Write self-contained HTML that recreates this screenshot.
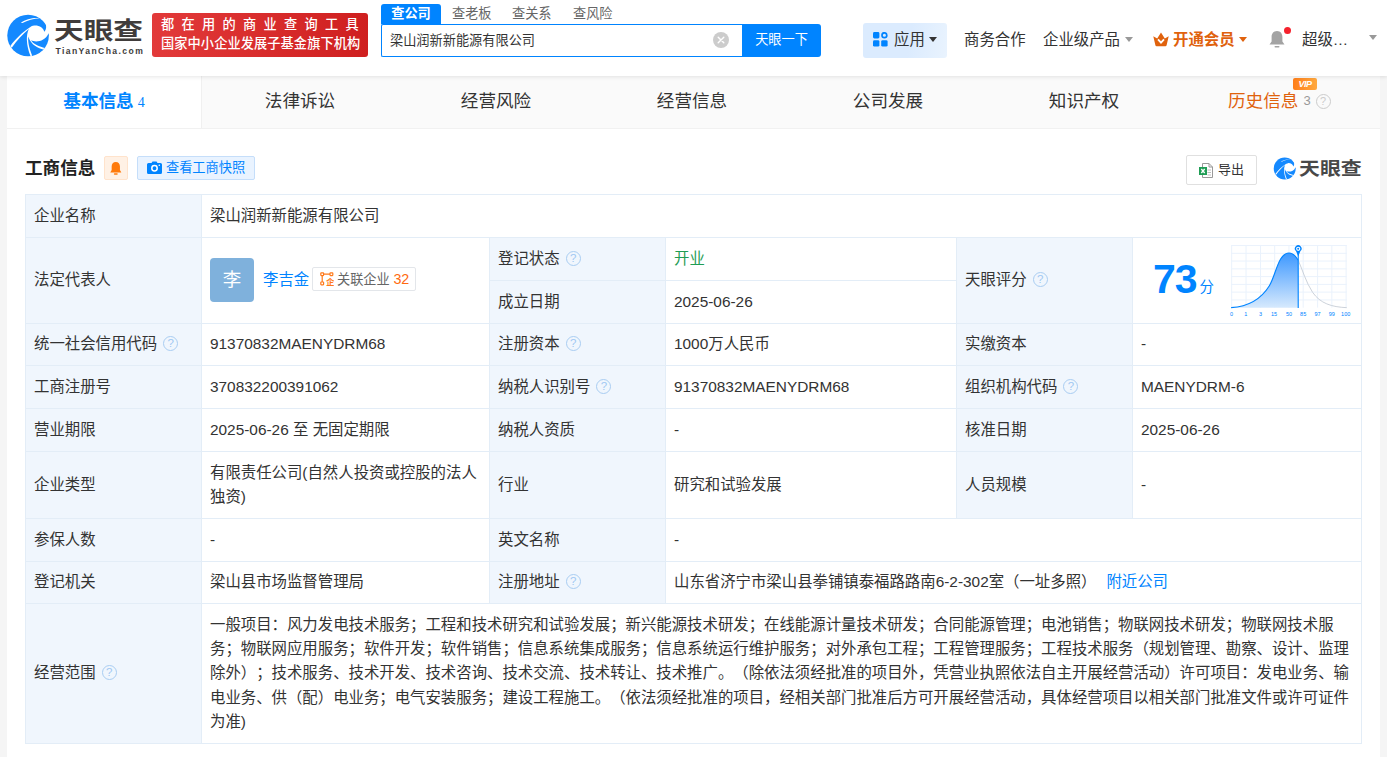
<!DOCTYPE html>
<html lang="zh-CN">
<head>
<meta charset="utf-8">
<title>梁山润新新能源有限公司 - 天眼查</title>
<style>
*{box-sizing:border-box;margin:0;padding:0}
html,body{width:1387px;height:757px;overflow:hidden;background:#f5f5f5}
body{font-family:"Liberation Sans","Noto Sans CJK SC",sans-serif;color:#333;font-size:15px;position:relative;text-spacing-trim:space-all}
a{text-decoration:none;color:inherit}
.abs{position:absolute}
/* header */
#hd{position:absolute;left:0;top:0;width:1387px;height:76px;background:#fff;box-shadow:0 1px 4px rgba(0,0,0,.10);z-index:5}
#logoTxt{left:54px;top:12.5px;font-size:24px;font-weight:700;color:#403c3b;letter-spacing:0;line-height:36px;transform-origin:left top;transform:scaleX(1.235);white-space:nowrap}
#logoSub{left:55.5px;top:44.8px;font-size:8.6px;font-weight:700;color:#403c3b;letter-spacing:1.4px;line-height:12px;white-space:nowrap}
#banner{left:152px;top:13px;width:216px;height:44px;border-radius:3px;background:linear-gradient(90deg,#e23a3a,#cf1f1f);color:#fff;font-size:13.2px;font-weight:500;line-height:19px;padding:2px 0 0 9px;white-space:nowrap}
#banner .l1{letter-spacing:7.3px;display:block;height:19px}
#banner .l2{display:block;letter-spacing:.1px}
.stab{top:4px;height:20px;font-size:13.2px;line-height:19px;color:#666;white-space:nowrap}
#stab1{left:381px;width:60px;background:#0084ff;color:#fff;text-align:center;border-radius:3px 3px 0 0;font-weight:700}
#sbox{left:381px;top:24px;width:362px;height:33px;border:1px solid #0084ff;border-right:0;border-radius:2px 0 0 2px;background:#fff}
#sval{left:390px;top:24px;line-height:33px;font-size:13.2px;color:#333;white-space:nowrap}
#sclr{left:713px;top:32px;width:16px;height:16px;border-radius:50%;background:#ccc}
#sbtn{left:742px;top:24px;width:79px;height:33px;background:#0084ff;color:#fff;font-size:13.2px;line-height:32px;text-align:center;border-radius:0 3px 3px 0}
#app{left:863px;top:23px;width:84px;height:35px;background:linear-gradient(100deg,#dbebfe 55%,#e9f3fe);border-radius:3px}
.nav{top:23px;line-height:34px;font-size:15.4px;color:#333;white-space:nowrap}
.caret{width:0;height:0;border-left:4px solid transparent;border-right:4px solid transparent;border-top:5px solid #999}
/* page */
#main{position:absolute;left:7px;top:76px;width:1373px;height:690px;background:#fff}
#tabs{position:absolute;left:0;top:0;width:1373px;height:53px;background:#fafafa;border-bottom:1px solid #f1f1f1}
#tabs .t{position:absolute;top:0;height:52px;line-height:51px;font-size:17.6px;color:#333;text-align:center;white-space:nowrap}
#tabs .act{background:#fff;color:#0084ff;font-weight:700;border-right:1px solid #f0f0f0}
/* section */
#secT{left:25px;top:155px;font-size:17.6px;font-weight:700;line-height:26px;color:#222;white-space:nowrap}
#bellBox{left:104px;top:156px;width:24px;height:24px;background:#fff1e5;border:1px solid #ffe3cc;border-radius:2px}
#snap{left:137px;top:156px;width:118px;height:24px;background:#e9f3ff;border:1px solid #c5defa;border-radius:2px;color:#0084ff;font-size:13.2px;line-height:22px;white-space:nowrap}
#exp{left:1186px;top:155px;width:71px;height:30px;border:1px solid #e0e0e0;border-radius:2px;background:#fff;font-size:13px;line-height:28px;color:#333;white-space:nowrap}
/* table */
#tb{position:absolute;left:25px;top:194px;width:1336px;border-collapse:collapse;table-layout:fixed;font-size:15.4px;color:#333}
#tb td{border:1px solid #e3edf7;padding:0 9px 0 8px;vertical-align:middle;line-height:24.2px;background:#fff}
#tb tr{height:43px}
#tb td.k{background:#f0f6fd}
.q{display:inline-block;width:15px;height:15px;border:1.3px solid #a9cdf2;border-radius:50%;color:#9fc8f3;font-size:11.5px;line-height:12.5px;text-align:center;vertical-align:2px;margin-left:6px;font-family:"Liberation Sans",sans-serif}
.blue{color:#0084ff}
</style>
</head>
<body>
<div id="hd">
  <svg class="abs" style="left:4px;top:12px" width="50" height="48" viewBox="0 0 789 757">
    <circle cx="380" cy="370" r="328" fill="#1489ff"/>
    <path d="M265 168C340 118 470 84 562 99C470 106 370 132 292 174Z" fill="#fff"/>
    <path d="M635 312C625 250 560 208 480 212C440 215 418 232 405 245C300 310 180 430 100 535L122 562C200 450 300 345 392 268C345 360 350 520 418 695L445 690C395 570 372 460 385 388C405 470 480 560 618 592L640 566C545 545 455 500 427 447C500 482 645 470 702 340L730 340L730 150L640 150C680 215 668 280 635 312Z" fill="#fff"/>
  </svg>
  <div id="logoTxt" class="abs">天眼查</div>
  <div id="logoSub" class="abs">TianYanCha.com</div>
  <div id="banner" class="abs"><span class="l1">都在用的商业查询工具</span><span class="l2">国家中小企业发展子基金旗下机构</span></div>
  <div id="stab1" class="abs stab">查公司</div>
  <div class="abs stab" style="left:452px">查老板</div>
  <div class="abs stab" style="left:512px">查关系</div>
  <div class="abs stab" style="left:573px">查风险</div>
  <div id="sbox" class="abs"></div>
  <div id="sval" class="abs">梁山润新新能源有限公司</div>
  <div id="sclr" class="abs"><svg width="16" height="16" viewBox="0 0 16 16"><path d="M5.2 5.2L10.8 10.8M10.8 5.2L5.2 10.8" stroke="#fff" stroke-width="1.4" stroke-linecap="round"/></svg></div>
  <div id="sbtn" class="abs">天眼一下</div>
  <div id="app" class="abs"></div>
  <svg class="abs" style="left:873px;top:32px" width="15" height="15" viewBox="0 0 15 15"><rect x="0" y="0" width="6.4" height="6.4" rx="1.4" fill="#0084ff"/><rect x="0" y="8.2" width="6.4" height="6.4" rx="1.4" fill="#0084ff"/><rect x="8.2" y="8.2" width="6.4" height="6.4" rx="1.4" fill="#0084ff"/><circle cx="11.4" cy="3.2" r="2.4" fill="none" stroke="#0084ff" stroke-width="1.7"/></svg>
  <div class="abs nav" style="left:894px;color:#333">应用</div>
  <div class="abs caret" style="left:929px;top:37px;border-top-color:#333"></div>
  <div class="abs nav" style="left:964px">商务合作</div>
  <div class="abs nav" style="left:1043px">企业级产品</div>
  <div class="abs caret" style="left:1125px;top:37px"></div>
  <svg class="abs" style="left:1153px;top:31.500px" width="16" height="15" viewBox="0 0 16 15"><path d="M0.300 4.200L4.200 6.600L8 0.600L11.800 6.600L15.700 4.200L13.600 13.200Q13.400 14.200 12.400 14.200H3.600Q2.600 14.200 2.400 13.200Z" fill="#e0620d"/><path d="M5 7.300L8 10.600L11 7.300" fill="none" stroke="#fff" stroke-width="1.800"/></svg>
  <div class="abs nav" style="left:1173px;color:#e0620d;font-weight:700">开通会员</div>
  <div class="abs caret" style="left:1239px;top:37px;border-top-color:#e0620d"></div>
  <svg class="abs" style="left:1268px;top:30px" width="18" height="19" viewBox="0 0 18 19"><path d="M9 1C5.4 1 3.6 3.8 3.6 7V11.5L1.5 14.5H16.500L14.4 11.5V7C14.4 3.800 12.600 1 9 1Z" fill="#a3a3a3"/><rect x="6.5" y="16" width="5" height="1.6" rx=".8" fill="#a3a3a3"/></svg>
  <div class="abs" style="left:1284px;top:27px;width:7px;height:7px;border-radius:50%;background:#f5222d"></div>
  <div class="abs nav" style="left:1302px">超级…</div>
  <div class="abs caret" style="left:1369px;top:35px"></div>
</div>

<div id="main">
  <div id="tabs">
    <div class="t act" style="left:0;width:195px">基本信息<span style="font-family:'Liberation Serif',serif;font-weight:400;font-size:14px;margin-left:4px">4</span></div>
    <div class="t" style="left:195px;width:196px">法律诉讼</div>
    <div class="t" style="left:391px;width:196px">经营风险</div>
    <div class="t" style="left:587px;width:196px">经营信息</div>
    <div class="t" style="left:783px;width:196px">公司发展</div>
    <div class="t" style="left:979px;width:196px">知识产权</div>
    <div class="t" style="left:1175px;width:197px;color:#e0620d;text-align:left;padding-left:46px">历史信息<span style="font-size:13px;color:#999;margin-left:5px;position:relative;top:-2px">3</span></div>
    <div class="abs" style="left:1308.5px;top:17.5px;width:15px;height:15px;border:1.3px solid #ccc;border-radius:50%;color:#ccc;font-size:11px;line-height:12.5px;text-align:center">?</div>
    <div class="abs" style="left:1286px;top:2px;width:24px;height:12px;background:linear-gradient(90deg,#ff7e1a,#ffa940);border-radius:2px;color:#fff;font-size:9px;line-height:12px;font-weight:700;font-style:italic;text-align:center;letter-spacing:-.5px">VIP</div>
  </div>
</div>

<div id="secT" class="abs">工商信息</div>
<div id="bellBox" class="abs"><svg width="22" height="22" viewBox="0 0 22 22"><g transform="translate(10.800 11.400) scale(1.150) translate(-11 -10.600)"><path d="M11 5C8.700 5 7.400 6.800 7.400 9V12L6.200 14.200H15.800L14.600 12V9C14.600 6.800 13.300 5 11 5Z" fill="#ff7a0a"/><rect x="9.300" y="14.800" width="3.400" height="1.300" rx=".6" fill="#ff7a0a"/></g></svg></div>
<div id="snap" class="abs"><svg class="abs" style="left:9px;top:4px" width="15" height="13" viewBox="0 0 15 13"><path d="M1.5 2H4.500L5.500 0.500H9.500L10.500 2H13.500Q15 2 15 3.500V11.500Q15 13 13.500 13H1.500Q0 13 0 11.500V3.500Q0 2 1.500 2Z" fill="#0084ff"/><circle cx="7.500" cy="7.300" r="2.700" fill="none" stroke="#fff" stroke-width="1.500"/><circle cx="12.300" cy="4.300" r=".8" fill="#fff"/></svg><span class="abs" style="left:28px;top:0">查看工商快照</span></div>
<div id="exp" class="abs"><svg class="abs" style="left:12px;top:6.500px" width="14" height="15" viewBox="0 0 14 15"><path d="M3.500 .5H10L13.500 4V14.500H3.500Z" fill="#fff" stroke="#999" stroke-width="1"/><path d="M10 .5V4H13.500" fill="none" stroke="#999" stroke-width="1"/><path d="M8.500 7H12M8.500 9.500H12M8.500 12H12" stroke="#bbb" stroke-width="1"/><rect x="0" y="4" width="8" height="8" fill="#1f9d55"/><path d="M2.300 6L5.700 10M5.700 6L2.300 10" stroke="#fff" stroke-width="1.300"/></svg><span class="abs" style="left:31px;top:0">导出</span></div>
<svg class="abs" style="left:1272.3px;top:155.8px" width="26.4" height="25.4" viewBox="0 0 789 757">
  <circle cx="380" cy="370" r="328" fill="#1489ff"/>
  <path d="M265 168C340 118 470 84 562 99C470 106 370 132 292 174Z" fill="#fff"/>
  <path d="M635 312C625 250 560 208 480 212C440 215 418 232 405 245C300 310 180 430 100 535L122 562C200 450 300 345 392 268C345 360 350 520 418 695L445 690C395 570 372 460 385 388C405 470 480 560 618 592L640 566C545 545 455 500 427 447C500 482 645 470 702 340L730 340L730 150L640 150C680 215 668 280 635 312Z" fill="#fff"/>
</svg>
<div class="abs" style="left:1298.5px;top:154.5px;font-size:18px;font-weight:700;color:#484848;line-height:28px;white-space:nowrap;transform-origin:left top;transform:scaleX(1.16)">天眼查</div>

<table id="tb">
<colgroup><col style="width:176px"><col style="width:288px"><col style="width:176px"><col style="width:291px"><col style="width:176px"><col style="width:229px"></colgroup>
<tr><td class="k">企业名称</td><td colspan="5">梁山润新新能源有限公司</td></tr>
<tr><td class="k" rowspan="2">法定代表人</td><td rowspan="2" style="position:relative">
  <div class="abs" style="left:8px;top:20px;width:44px;height:44px;border-radius:4px;background:#7fb1dc;color:#fff;font-size:18.5px;line-height:43px;text-align:center">李</div>
  <div class="abs blue" style="left:61px;top:30px;line-height:24px;white-space:nowrap">李吉金</div>
  <div class="abs" style="left:110px;top:29px;width:104px;height:24px;border:1px solid #e3e6ea;border-radius:2px;font-size:13.2px;line-height:22px;white-space:nowrap;color:#666"><svg class="abs" style="left:7px;top:4px" width="14" height="14" viewBox="0 0 14 14"><g fill="none" stroke="#ff7a1a" stroke-width="1.2"><rect x=".8" y=".8" width="2.800" height="2.800" rx=".5"/><rect x="10" y=".8" width="2.800" height="2.800" rx=".5"/><rect x=".8" y="10" width="2.800" height="2.800" rx=".5"/><path d="M3.600 2.200H10M2.200 3.600V10"/></g><text x="6" y="13.300" font-size="8.500" font-weight="700" fill="#ff7a1a" font-family="Liberation Sans,Noto Sans CJK SC,sans-serif">企</text></svg><span class="abs" style="left:24px;top:0">关联企业 <span style="color:#ff6a10;font-size:14.3px">32</span></span></div>
</td><td class="k">登记状态<span class="q">?</span></td><td style="color:#1f9d55">开业</td><td class="k" rowspan="2">天眼评分<span class="q">?</span></td><td rowspan="2" style="position:relative" id="score"></td></tr>
<tr><td class="k">成立日期</td><td>2025-06-26</td></tr>
<tr style="height:42px"><td class="k">统一社会信用代码<span class="q">?</span></td><td>91370832MAENYDRM68</td><td class="k">注册资本<span class="q">?</span></td><td>1000万人民币</td><td class="k">实缴资本</td><td>-</td></tr>
<tr><td class="k">工商注册号</td><td>370832200391062</td><td class="k">纳税人识别号<span class="q">?</span></td><td>91370832MAENYDRM68</td><td class="k">组织机构代码<span class="q">?</span></td><td>MAENYDRM-6</td></tr>
<tr><td class="k">营业期限</td><td>2025-06-26 至 无固定期限</td><td class="k">纳税人资质</td><td>-</td><td class="k">核准日期</td><td>2025-06-26</td></tr>
<tr style="height:67px"><td class="k">企业类型</td><td>有限责任公司(自然人投资或控股的法人独资)</td><td class="k">行业</td><td>研究和试验发展</td><td class="k">人员规模</td><td>-</td></tr>
<tr><td class="k">参保人数</td><td>-</td><td class="k">英文名称</td><td colspan="3">-</td></tr>
<tr style="height:42px"><td class="k">登记机关</td><td>梁山县市场监督管理局</td><td class="k">注册地址<span class="q">?</span></td><td colspan="3">山东省济宁市梁山县拳铺镇泰福路路南6-2-302室（一址多照）<span class="blue" style="margin-left:10px">附近公司</span></td></tr>
<tr style="height:140px"><td class="k">经营范围<span class="q">?</span></td><td colspan="5">一般项目：风力发电技术服务；工程和技术研究和试验发展；新兴能源技术研发；在线能源计量技术研发；合同能源管理；电池销售；物联网技术研发；物联网技术服务；物联网应用服务；软件开发；软件销售；信息系统集成服务；信息系统运行维护服务；对外承包工程；工程管理服务；工程技术服务（规划管理、勘察、设计、监理除外）；技术服务、技术开发、技术咨询、技术交流、技术转让、技术推广。（除依法须经批准的项目外，凭营业执照依法自主开展经营活动）许可项目：发电业务、输电业务、供（配）电业务；电气安装服务；建设工程施工。（依法须经批准的项目，经相关部门批准后方可开展经营活动，具体经营项目以相关部门批准文件或许可证件为准)</td></tr>
</table>
<div class="abs" style="left:1153px;top:255px;font-size:41px;font-weight:700;color:#0084ff;line-height:48px;white-space:nowrap;letter-spacing:-1px">73</div>
<div class="abs" style="left:1199.5px;top:277px;font-size:14.5px;color:#0084ff;line-height:20px">分</div>
<svg class="abs" style="left:1225px;top:238px" width="130" height="84" viewBox="0 0 1172 757">
<defs><linearGradient id="sg" x1="0" y1="0" x2="0" y2="1"><stop offset="0" stop-color="#3d98ff"/><stop offset="1" stop-color="#d6e9fd"/></linearGradient></defs>
<path d="M60 65V628M190 65V628M320 65V628M448 65V628M577 65V628M705 65V628M835 65V628M963 65V628M1092 65V628M55 68H1098M55 138H1098M55 208H1098M55 278H1098M55 348H1098M55 418H1098M55 488H1098M55 558H1098" fill="none" stroke="#eaf2fc" stroke-width="9"/>
<path d="M55 628C200 618 320 560 400 430C460 330 480 135 577 135C615 135 640 165 660 200V628Z" fill="url(#sg)"/>
<path d="M660 200C700 290 730 400 790 490C860 590 960 622 1098 628" fill="none" stroke="#c6ccd5" stroke-width="8"/>
<path d="M55 628C200 618 320 560 400 430C460 330 480 135 577 135C615 135 640 165 660 200" fill="none" stroke="#0084ff" stroke-width="10"/>
<path d="M660 130V630" stroke="#0084ff" stroke-width="10"/>
<path d="M660 165L640 118A30 30 0 1 1 680 118Z" fill="#0084ff"/>
<circle cx="660" cy="97" r="19" fill="#fff"/><circle cx="660" cy="97" r="9" fill="#0084ff"/>
<g font-family="Liberation Sans,sans-serif" font-size="50" fill="#0084ff"><text x="60" y="700" text-anchor="middle">0</text><text x="187" y="700" text-anchor="middle">1</text><text x="320" y="700" text-anchor="middle">3</text><text x="443" y="700" text-anchor="middle">15</text><text x="577" y="700" text-anchor="middle">50</text><text x="705" y="700" text-anchor="middle">85</text><text x="835" y="700" text-anchor="middle">97</text><text x="962" y="700" text-anchor="middle">99</text><text x="1088" y="700" text-anchor="middle">100</text></g>
</svg>

</body>
</html>
